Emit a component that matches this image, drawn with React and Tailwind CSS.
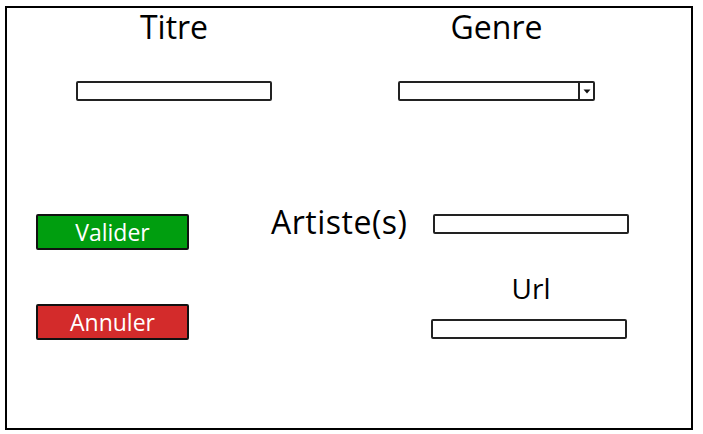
const label = "font-['Open_Sans',sans-serif] text-black";

const Field = ({ className = '' }) => (
  <div className={`h-[20px] w-[196px] rounded-[2px] border-2 border-[#222] bg-white ${className}`} />
);

export default function App() {
  return (
    <div className="min-h-screen bg-white pt-[6px] pl-[5px]">
      <div className="h-[424px] w-[688px] border-2 border-black">
        <div className="flex">
          <div className="ml-[69px] flex w-[196px] flex-col items-center">
            <div className={`${label} mt-[3px] text-[32px] leading-[32px]`}>Titre</div>
            <Field className="mt-[38px]" />
          </div>
          <div className="ml-[126px] flex w-[197px] flex-col items-center">
            <div className={`${label} mt-[3px] text-[32px] leading-[32px]`}>Genre</div>
            <div className="mt-[38px] flex h-[20px] w-[197px] rounded-[2px] border-2 border-[#222] bg-white">
              <div className="flex-1" />
              <div className="flex w-[15px] items-center justify-center border-l-2 border-[#222]">
                <svg width="8" height="5" viewBox="0 0 8 5">
                  <path d="M0.5 0.5 L7.5 0.5 L4 4.5 Z" fill="#111" />
                </svg>
              </div>
            </div>
          </div>
        </div>

        <div className="ml-[29px] mt-[113px] flex items-start">
          <div className="flex w-[153px] flex-col">
            <button className="flex h-[36px] items-center justify-center rounded-[2px] border-2 border-[#111] bg-[#009e0f] font-['Open_Sans',sans-serif] text-[23px] font-medium leading-none text-white">
              Valider
            </button>
            <button className="mt-[54px] flex h-[36px] items-center justify-center rounded-[2px] border-2 border-[#111] bg-[#d32b2b] font-['Open_Sans',sans-serif] text-[23px] font-medium leading-none text-white">
              Annuler
            </button>
          </div>
          <div className="w-[244px] pl-[82px]">
            <div className={`${label} -mt-[8px] text-[32px] leading-[32px] tracking-[0.5px]`}>Artiste(s)</div>
          </div>
          <div className="flex w-[196px] flex-col items-center">
            <Field className="h-[19px]" />
            <div className={`${label} mt-[40px] text-[28px] leading-[28px]`}>Url</div>
            <Field className="-ml-[4px] mt-[17px]" />
          </div>
        </div>
      </div>
    </div>
  );
}
